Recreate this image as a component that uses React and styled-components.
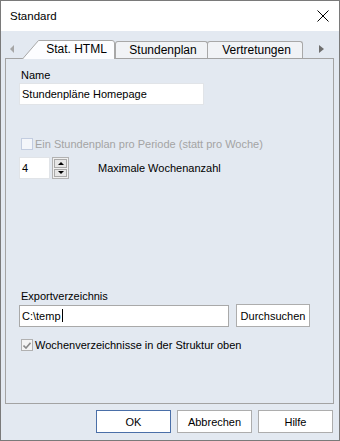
import styled, { createGlobalStyle } from 'styled-components';

const GlobalStyle = createGlobalStyle`
  html, body {
    margin: 0;
    padding: 0;
    background: #fff;
  }
  body {
    font-family: "Liberation Sans", Arial, sans-serif;
    font-size: 11px;
    color: #000;
  }
`;

const Window = styled.div`
  width: 340px;
  height: 441px;
  box-sizing: border-box;
  border: 1px solid #7a7a7a;
  display: flex;
  flex-direction: column;
  background: #e3e9f1;
`;

const TitleBar = styled.div`
  height: 30px;
  flex: none;
  background: #fff;
  display: flex;
  align-items: center;
  justify-content: space-between;
  padding: 0 10px 0 9px;
  font-size: 11.5px;
`;

const Body = styled.div`
  flex: 1;
  display: flex;
  flex-direction: column;
  padding-top: 9px;
`;

const TabStrip = styled.div`
  height: 18px;
  display: flex;
  align-items: flex-end;
  position: relative;
  z-index: 1;
`;

const ArrowZone = styled.div`
  width: ${({ $w }) => $w}px;
  align-self: stretch;
  display: flex;
  align-items: center;
  justify-content: ${({ $end }) => ($end ? 'flex-end' : 'flex-start')};
  padding: ${({ $end }) => ($end ? '0 15px 1px 0' : '0 0 1px 9px')};
  box-sizing: border-box;
  flex: ${({ $grow }) => ($grow ? 1 : 'none')};
`;

const Arrow = styled.span`
  width: 0;
  height: 0;
  border-top: 4px solid transparent;
  border-bottom: 4px solid transparent;
  ${({ $dir, $color }) =>
    $dir === 'left'
      ? `border-right: 4px solid ${$color};`
      : `border-left: 5px solid ${$color};`}
`;

const ActiveTab = styled.div`
  position: relative;
  width: 93px;
  height: 19px;
  margin-bottom: -1px;
  box-sizing: border-box;
  padding: 0 0 0 16px;
  display: flex;
  align-items: center;
  justify-content: center;
  font-size: 12px;
  padding-bottom: 2px;

  svg {
    position: absolute;
    inset: 0;
    z-index: -1;
  }
`;

const Tab = styled.div`
  width: ${({ $w }) => $w}px;
  height: 17px;
  margin-left: ${({ $ml }) => $ml || 0}px;
  box-sizing: border-box;
  border: 1px solid #a8a8a8;
  border-bottom: none;
  border-radius: 3px 3px 0 0;
  background: #f1f3f6;
  display: flex;
  align-items: center;
  justify-content: center;
  padding: 0 0 1px 3px;
  font-size: 12px;
`;

const Panel = styled.div`
  height: 346px;
  box-sizing: border-box;
  margin: 0 5px 0 4px;
  border: 1px solid #a3a3a3;
  padding: 10px 0 0 13px;
  display: flex;
  flex-direction: column;
`;

const Label = styled.div`
  line-height: 13px;
  height: 13px;
  margin-left: 2px;
  margin-top: ${({ $mt }) => $mt || 0}px;
`;

const Field = styled.div`
  width: ${({ $w }) => $w}px;
  height: 22px;
  box-sizing: border-box;
  background: #fff;
  border: 1px solid ${({ $strong }) => ($strong ? '#a9a9a9' : '#e1e4e8')};
  display: flex;
  align-items: center;
  padding-left: 2px;
  margin-top: ${({ $mt }) => $mt || 0}px;
  flex: none;
`;

const Caret = styled.span`
  width: 1px;
  height: 13px;
  background: #000;
  margin-left: 1px;
`;

const Row = styled.div`
  display: flex;
  align-items: center;
  gap: ${({ $gap }) => $gap || 0}px;
  margin-top: ${({ $mt }) => $mt || 0}px;
`;

const CheckRow = styled.div`
  display: flex;
  align-items: center;
  height: 12px;
  margin: ${({ $mt }) => $mt || 0}px 0 0 2px;
  gap: 2px;
  color: ${({ $disabled }) => ($disabled ? '#a4a4a4' : '#000')};
`;

const CheckBox = styled.span`
  width: 12px;
  height: 12px;
  box-sizing: border-box;
  border: 1px solid ${({ $disabled }) => ($disabled ? '#c3cde0' : '#b1b1b1')};
  background: ${({ $disabled }) => ($disabled ? '#f4f6fa' : '#f4f4f4')};
  display: flex;
  align-items: center;
  justify-content: center;
  flex: none;
`;

const Spin = styled.div`
  width: 17px;
  height: 22px;
  box-sizing: border-box;
  border: 1px solid #b2b2b2;
  background: #f0f0f0;
  padding: 1px;
  display: flex;
  flex-direction: column;
  gap: 1px;
  margin-left: 2px;
`;

const SpinButton = styled.div`
  flex: 1;
  border: 1px solid #a9a9a9;
  background: #e6e6e6;
  display: flex;
  align-items: center;
  justify-content: center;
`;

const Triangle = styled.span`
  width: 0;
  height: 0;
  border-left: 3px solid transparent;
  border-right: 3px solid transparent;
  ${({ $up }) => ($up ? 'border-bottom: 3px solid #000;' : 'border-top: 3px solid #000;')}
`;

const SpinLabel = styled.span`
  margin-left: 29px;
`;

const Button = styled.button`
  width: ${({ $w }) => $w || 75}px;
  height: 23px;
  box-sizing: border-box;
  background: #fff;
  border: 1px solid ${({ $primary }) => ($primary ? '#4a6fa8' : '#adadad')};
  font-family: inherit;
  font-size: 11px;
  color: #000;
  padding: 0;
  flex: none;
`;

const Footer = styled.div`
  display: flex;
  justify-content: flex-end;
  gap: 6px;
  padding: 6px 6px 0 0;
`;

const App = () => (
  <>
    <GlobalStyle />
    <Window>
      <TitleBar>
        <span>Standard</span>
        <svg width="12" height="12" viewBox="0 0 12 12">
          <path d="M0.5 0.5 L11.5 11.5 M11.5 0.5 L0.5 11.5" stroke="#000" strokeWidth="1" />
        </svg>
      </TitleBar>
      <Body>
        <TabStrip>
          <ArrowZone $w={21}>
            <Arrow $dir="left" $color="#a6a6a6" />
          </ArrowZone>
          <ActiveTab>
            <svg width="93" height="19" viewBox="0 0 93 19">
              <path d="M0.5 19 L16.5 0.5 H90 Q92.5 0.5 92.5 3 V19" fill="#fcfdff" stroke="#a8a8a8" />
            </svg>
            Stat. HTML
          </ActiveTab>
          <Tab $w={93}>Stundenplan</Tab>
          <Tab $w={96} $ml={-1}>Vertretungen</Tab>
          <ArrowZone $grow $end>
            <Arrow $dir="right" $color="#6e6e6e" />
          </ArrowZone>
        </TabStrip>
        <Panel>
          <Label>Name</Label>
          <Field $w={185} $mt={1}>Stundenpläne Homepage</Field>
          <CheckRow $disabled $mt={33}>
            <CheckBox $disabled />
            Ein Stundenplan pro Periode (statt pro Woche)
          </CheckRow>
          <Row $mt={7}>
            <Field $w={31}>4</Field>
            <Spin>
              <SpinButton>
                <Triangle $up />
              </SpinButton>
              <SpinButton>
                <Triangle />
              </SpinButton>
            </Spin>
            <SpinLabel>Maximale Wochenanzahl</SpinLabel>
          </Row>
          <Label $mt={111}>Exportverzeichnis</Label>
          <Row $mt={1} $gap={7}>
            <Field $w={210} $strong>
              C:\temp
              <Caret />
            </Field>
            <Button $w={74}>Durchsuchen</Button>
          </Row>
          <CheckRow $mt={12}>
            <CheckBox>
              <svg width="8" height="7" viewBox="0 0 8 7">
                <path d="M0.5 3.5 L3 6 L7.5 0.8" fill="none" stroke="#8a8a8a" strokeWidth="1.6" />
              </svg>
            </CheckBox>
            Wochenverzeichnisse in der Struktur oben
          </CheckRow>
        </Panel>
        <Footer>
          <Button $primary>OK</Button>
          <Button>Abbrechen</Button>
          <Button>Hilfe</Button>
        </Footer>
      </Body>
    </Window>
  </>
);

export default App;
